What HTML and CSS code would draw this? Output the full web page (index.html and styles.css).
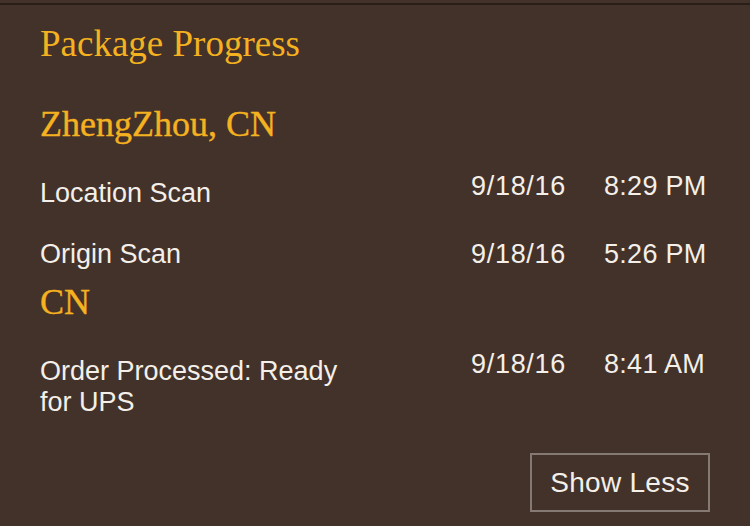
FILE: index.html
```html
<!DOCTYPE html>
<html lang="en">
<head>
  <meta charset="UTF-8" />
  <meta name="viewport" content="width=device-width, initial-scale=1" />
  <title>Package Progress</title>
  <link rel="stylesheet" href="styles.css">
</head>
<body>
  <div class="topline"></div>
  <div class="panel">
    <h1 class="title">Package Progress</h1>

    <h2 class="place place-first">ZhengZhou, CN</h2>
    <div class="event">
      <div class="event-label">Location Scan</div>
      <div class="event-meta">
        <span class="event-date">9/18/16</span>
        <span class="event-time">8:29 PM</span>
      </div>
    </div>
    <div class="event">
      <div class="event-label">Origin Scan</div>
      <div class="event-meta">
        <span class="event-date">9/18/16</span>
        <span class="event-time">5:26 PM</span>
      </div>
    </div>

    <h2 class="place">CN</h2>
    <div class="event">
      <div class="event-label">Order Processed: Ready for UPS</div>
      <div class="event-meta">
        <span class="event-date">9/18/16</span>
        <span class="event-time">8:41 AM</span>
      </div>
    </div>

    <div class="actions">
      <button class="toggle">Show Less</button>
    </div>
  </div>
</body>
</html>
```

FILE: styles.css
```css
body {
  margin: 0;
  background: #433229;
  color: #f4efe9;
  font-family: "Liberation Sans", Arial, sans-serif;
}
.topline {
  margin-top: 3px;
  height: 2px;
  background: #2a1f18;
}
.panel {
  padding: 0 40px;
}
.title {
  margin: 17px 0 0;
  font-family: "Liberation Serif", "Times New Roman", serif;
  font-weight: normal;
  font-size: 37px;
  line-height: 44px;
  color: #f4b120;
}
.place {
  margin: 12px 0 0;
  font-family: "Liberation Serif", "Times New Roman", serif;
  font-weight: normal;
  font-size: 36px;
  line-height: 40px;
  color: #f4b120;
  -webkit-text-stroke: 0.4px #f4b120;
}
.place-first {
  margin-top: 38px;
}
.event {
  display: flex;
  align-items: flex-start;
  margin-top: 30px;
  font-size: 27px;
  line-height: 31px;
}
.place + .event {
  margin-top: 27px;
}
.place + .event .event-label {
  padding-top: 7px;
}
.event-label {
  width: 320px;
}
.event-meta {
  display: flex;
  width: 239px;
  margin-left: auto;
}
.event-date {
  width: 133px;
  letter-spacing: 0.7px;
}
.event-time {
  letter-spacing: 0.3px;
}
.actions {
  display: flex;
  justify-content: flex-end;
  margin-top: 35px;
}
.toggle {
  width: 180px;
  height: 59px;
  padding: 0;
  border: 2px solid #857a73;
  background: transparent;
  color: #f4efe9;
  font-family: "Liberation Sans", Arial, sans-serif;
  font-size: 28px;
  letter-spacing: 0.3px;
  cursor: pointer;
}
```
